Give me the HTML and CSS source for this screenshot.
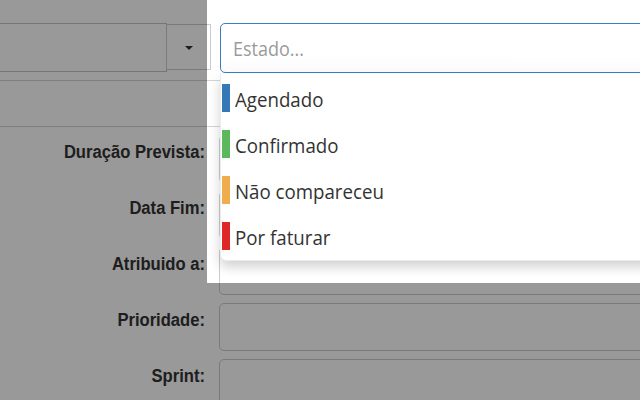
FILE: index.html
```
<!DOCTYPE html>
<html lang="pt">
<head>
<meta charset="utf-8">
<title>Estado</title>
<link rel="stylesheet" href="styles.css">
</head>
<body>
<div class="page">
  <div class="top-row">
    <div class="select-group">
      <div class="select-box"></div>
      <div class="select-btn"><span class="caret"></span></div>
    </div>
    <div class="estado-wrap">
      <div class="estado-input"><span class="tall">Estado...</span></div>
      <ul class="estado-menu">
        <li class="estado-item"><span class="bar bar-blue"></span><span class="tall">Agendado</span></li>
        <li class="estado-item"><span class="bar bar-green"></span><span class="tall">Confirmado</span></li>
        <li class="estado-item"><span class="bar bar-orange"></span><span class="tall">Não compareceu</span></li>
        <li class="estado-item"><span class="bar bar-red"></span><span class="tall">Por faturar</span></li>
      </ul>
    </div>
  </div>
  <div class="band"></div>
  <div class="form">
    <div class="form-row"><label class="lbl"><span class="tall">Duração Prevista:</span></label><div class="field"></div></div>
    <div class="form-row"><label class="lbl"><span class="tall">Data Fim:</span></label><div class="field"></div></div>
    <div class="form-row"><label class="lbl"><span class="tall">Atribuido a:</span></label><div class="field"></div></div>
    <div class="form-row"><label class="lbl"><span class="tall">Prioridade:</span></label><div class="field"></div></div>
    <div class="form-row"><label class="lbl"><span class="tall">Sprint:</span></label><div class="field"></div></div>
  </div>
  <div class="spotlight"></div>
</div>
</body>
</html>
```
FILE: styles.css
```
html, body {
  margin: 0;
  padding: 0;
  background: #fff;
  overflow: hidden;
}
.page {
  position: relative;
  width: 640px;
  height: 400px;
  overflow: hidden;
  padding-top: 23px;
  box-sizing: border-box;
  font-family: "Open Sans", "Noto Sans", sans-serif;
  color: #333;
}
.tall {
  display: inline-block;
  transform: scaleY(1.08);
}
.top-row {
  display: flex;
  align-items: flex-start;
  gap: 9px;
  height: 50px;
  width: 700px;
}
.select-group {
  display: flex;
  align-items: flex-start;
  margin-left: -20px;
}
.select-box {
  width: 187px;
  height: 49px;
  box-sizing: border-box;
  border: 1px solid #c4c4c4;
}
.select-btn {
  width: 45px;
  height: 46px;
  margin-top: 1px;
  margin-left: -1px;
  box-sizing: border-box;
  border: 1px solid #ccc;
  display: flex;
  align-items: center;
  justify-content: center;
  padding-top: 1px;
}
.caret {
  width: 0;
  height: 0;
  border-left: 4.5px solid transparent;
  border-right: 4.5px solid transparent;
  border-top: 4.5px solid #333;
}
.estado-wrap {
  position: relative;
  width: 480px;
}
.estado-input {
  height: 50px;
  box-sizing: border-box;
  border: 1px solid #3a7dc0;
  border-radius: 5px 0 0 5px;
  padding-left: 12px;
  display: flex;
  align-items: center;
  font-size: 18px;
  color: #9a9a9a;
  background: linear-gradient(#fff 60%, #fbfbfb);
}
.estado-menu {
  position: absolute;
  top: 51px;
  left: 0;
  width: 480px;
  margin: 0;
  padding: 1px 0;
  list-style: none;
  background: #fff;
  border: 1px solid rgba(0,0,0,0.08);
  border-top: none;
  border-radius: 0 0 6px 6px;
  box-shadow: 0 6px 12px rgba(0,0,0,0.18);
  z-index: 5;
}
.estado-item {
  height: 46px;
  display: flex;
  align-items: center;
  font-size: 18.7px;
  color: #333;
}
.bar {
  width: 8px;
  height: 28px;
  margin-left: 1px;
  margin-right: 5px;
  flex: none;
}
.bar-blue { background: #3478b8; }
.bar-green { background: #5cb85c; }
.bar-orange { background: #f0ad4e; }
.bar-red { background: #df2727; }
.band {
  margin-top: 7px;
  height: 47px;
  box-sizing: border-box;
  border-top: 1px solid #d4d4d4;
  border-bottom: 1px solid #d4d4d4;
}
.form {
  margin-top: 8px;
  display: flex;
  flex-direction: column;
  gap: 8px;
}
.form-row {
  display: grid;
  grid-template-columns: 219px 480px;
  height: 48px;
}
.lbl {
  font-family: "Liberation Sans", Arial, sans-serif;
  font-weight: bold;
  font-size: 16.6px;
  line-height: 20px;
  text-align: right;
  padding: 7px 14px 0 0;
  color: #333;
}
.lbl .tall {
  transform: scaleY(1.1);
}
.field {
  height: 48px;
  box-sizing: border-box;
  border: 1px solid #ccc;
  border-radius: 5px;
}
.spotlight {
  position: absolute;
  left: 207px;
  top: -20px;
  width: 500px;
  height: 303px;
  box-shadow: 0 0 0 2000px rgba(0,0,0,0.4);
  pointer-events: none;
  z-index: 10;
}
```
